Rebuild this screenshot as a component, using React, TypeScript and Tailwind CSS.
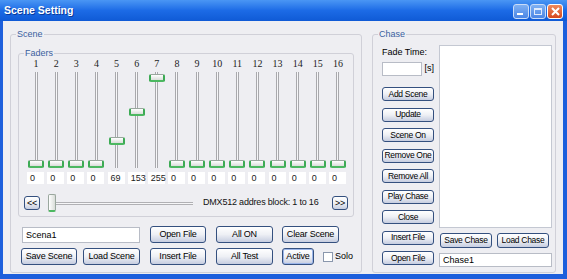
import React from 'react';

const values = [0, 0, 0, 0, 69, 153, 255, 0, 0, 0, 0, 0, 0, 0, 0, 0];

function XpButton({ label, small, className = '' }: { label: string; small?: boolean; className?: string }) {
  return (
    <div
      className={`flex items-center justify-center rounded-[3px] border border-[#34507f] bg-linear-to-b from-white via-[#eef0f5] to-[#c6cde0] ${
        small ? 'text-[8.5px] tracking-[-0.3px]' : 'text-[9px] tracking-[-0.2px]'
      } leading-none text-black whitespace-nowrap ${className}`}
    >
      {label}
    </div>
  );
}

function Fader({ index, value }: { index: number; value: number }) {
  const top = 90 - (value / 255) * 86;
  return (
    <div className="flex flex-col items-start">
      <div className="w-[20px] h-[12px] text-center font-['Liberation_Serif',serif] text-[10px] leading-[12px] text-[#222]">
        {index + 1}
      </div>
      <div className="relative w-[20px] h-[98px] flex justify-center">
        <div className="mt-[2px] w-[3px] h-[96px] border-x border-x-[#a8a8ac] bg-[#f6f6f8]" />
        {/* thumb */}
        <div
          className="absolute left-[2px] w-[16px] h-[8px] rounded-[2px] border border-[#9aa79e] border-x-2 border-x-[#3daa55] border-b-2 border-b-[#4cb861] bg-linear-to-b from-white to-[#d9ddd9]"
          style={{ top }}
        />
      </div>
      <div className="mt-[4px] ml-[1px] w-[17px] h-[12px] bg-white text-[9px] leading-[12px] pl-[3px] text-[#222]">
        {value}
      </div>
    </div>
  );
}

function GroupBox({ title, className = '', children }: { title: string; className?: string; children: React.ReactNode }) {
  return (
    <fieldset className={`border border-[#d0d0d8] rounded-[3px] ${className}`}>
      <legend className="ml-[5px] px-[1px] text-[9px] leading-[10px] text-[#3a5e9f]">{title}</legend>
      {children}
    </fieldset>
  );
}

export default function App() {
  return (
    <div className="w-[567px] h-[279px] flex flex-col bg-[#1d5fdc] font-['Liberation_Sans',Arial,sans-serif] text-black">
      {/* Title bar */}
      <div className="h-[21px] flex items-center justify-between pl-[4px] pr-[4px] bg-linear-to-b from-[#4a96f4] via-[#1c6be6] to-[#0f5ad6]">
        <span className="text-[10.5px] font-bold text-white [text-shadow:1px_1px_0_#0a3a9a]">Scene Setting</span>
        <div className="flex items-center gap-[1px] pt-[2px]">
          <div className="w-[16px] h-[15px] rounded-[3px] border border-[#c9dcf8] bg-linear-to-b from-[#7fb0f2] to-[#4b86e6] flex items-end pb-[3px] pl-[3px]">
            <div className="w-[6px] h-[2px] bg-white" />
          </div>
          <div className="w-[16px] h-[15px] rounded-[3px] border border-[#c9dcf8] bg-linear-to-b from-[#7fb0f2] to-[#4b86e6] flex items-center justify-center">
            <div className="w-[8px] h-[7px] border border-t-2 border-[#dfeafc]" />
          </div>
          <div className="w-[16px] h-[15px] rounded-[3px] border border-white bg-linear-to-b from-[#f08a5c] to-[#d4461c] flex items-center justify-center">
            <svg width="9" height="9" viewBox="0 0 9 9">
              <path d="M1 1 L8 8 M8 1 L1 8" stroke="white" strokeWidth="2" />
            </svg>
          </div>
        </div>
      </div>

      {/* Body */}
      <div className="flex-1 ml-[3px] mr-[4px] mb-[5px] bg-[#eeeef2] flex pl-[7px] pr-[7px] pt-[8px] pb-[1px] gap-[10px]">
        {/* Scene */}
        <GroupBox title="Scene" className="w-[352px]">
          <GroupBox title="Faders" className="mt-[9px] mx-[7px]">
            <div className="pl-[7px] grid grid-cols-16 w-[329px]">
              {values.map((v, i) => (
                <Fader key={i} index={i} value={v} />
              ))}
            </div>
            <div className="flex items-center pl-[5px] pr-[5px] mt-[10px] mb-[4px]">
              <XpButton label="<<" className="w-[16px] h-[14px] rounded-[2px]" />
              <div className="relative ml-[8px] w-[145px] h-[18px] flex items-center">
                <div className="w-full h-[3px] border-y border-y-[#b0b0b4] bg-[#f6f6f8]" />
                <div className="absolute left-0 top-0 w-[8px] h-[18px] rounded-[2px] border border-[#9aa79e] border-b-2 border-b-[#4cb861] bg-linear-to-r from-white to-[#d9ddd9]" />
              </div>
              <span className="ml-[10px] text-[9px] tracking-[-0.2px] text-[#111]">DMX512 addres block: 1 to 16</span>
              <div className="flex-1" />
              <XpButton label=">>" className="w-[16px] h-[14px] rounded-[2px]" />
            </div>
          </GroupBox>

          <div className="flex items-center mt-[9px]">
            <div className="ml-[11px] w-[118px] h-[16px] bg-white border border-[#b8bcc6] text-[9px] leading-[14px] pl-[3px]">Scena1</div>
            <XpButton label="Open File" className="ml-[10px] w-[56px] h-[17px]" />
            <XpButton label="All ON" className="ml-[10px] w-[57px] h-[17px]" />
            <XpButton label="Clear Scene" className="ml-[9px] w-[57px] h-[17px]" />
          </div>
          <div className="flex items-center mt-[5px]">
            <XpButton label="Save Scene" className="ml-[10px] w-[56px] h-[17px]" />
            <XpButton label="Load Scene" className="ml-[6px] w-[57px] h-[17px]" />
            <XpButton label="Insert File" className="ml-[10px] w-[56px] h-[17px]" />
            <XpButton label="All Test" className="ml-[10px] w-[57px] h-[17px]" />
            <XpButton label="Active" className="ml-[9px] w-[32px] h-[17px] border-[#1f3f85] shadow-[inset_0_0_0_1px_#9cb6ea]" />
            <div className="ml-[9px] w-[10px] h-[10px] bg-white border border-[#8a97ad]" />
            <span className="ml-[2px] text-[9px]">Solo</span>
          </div>
        </GroupBox>

        {/* Chase */}
        <GroupBox title="Chase" className="flex-1">
          <div className="flex pl-[9px] pr-[3px]">
            <div className="flex flex-col w-[52px]">
              <span className="mt-[8px] text-[9px] leading-[10px]">Fade Time:</span>
              <div className="flex items-center mt-[5px]">
                <div className="w-[41px] h-[14px] bg-white border border-[#b8bcc6]" />
                <span className="ml-[2px] text-[9px]">[s]</span>
              </div>
              <div className="flex flex-col gap-[6.5px] mt-[11px]">
                {['Add Scene', 'Update', 'Scene On', 'Remove One', 'Remove All', 'Play Chase', 'Close', 'Insert File', 'Open File'].map(
                  (l) => (
                    <XpButton key={l} label={l} small className="w-[52px] h-[14px]" />
                  ),
                )}
              </div>
            </div>
            <div className="ml-[5px] flex-1 flex flex-col">
              <div className="mt-[6px] h-[183px] bg-white border border-[#c4c8d2]" />
              <div className="flex mt-[5px] pl-[1px] gap-[5px]">
                <XpButton label="Save Chase" small className="w-[52px] h-[15px]" />
                <XpButton label="Load Chase" small className="w-[52px] h-[15px]" />
              </div>
              <div className="mt-[5px] h-[14px] bg-white border border-[#b8bcc6] text-[9px] leading-[12px] pl-[3px]">Chase1</div>
            </div>
          </div>
        </GroupBox>
      </div>
    </div>
  );
}
